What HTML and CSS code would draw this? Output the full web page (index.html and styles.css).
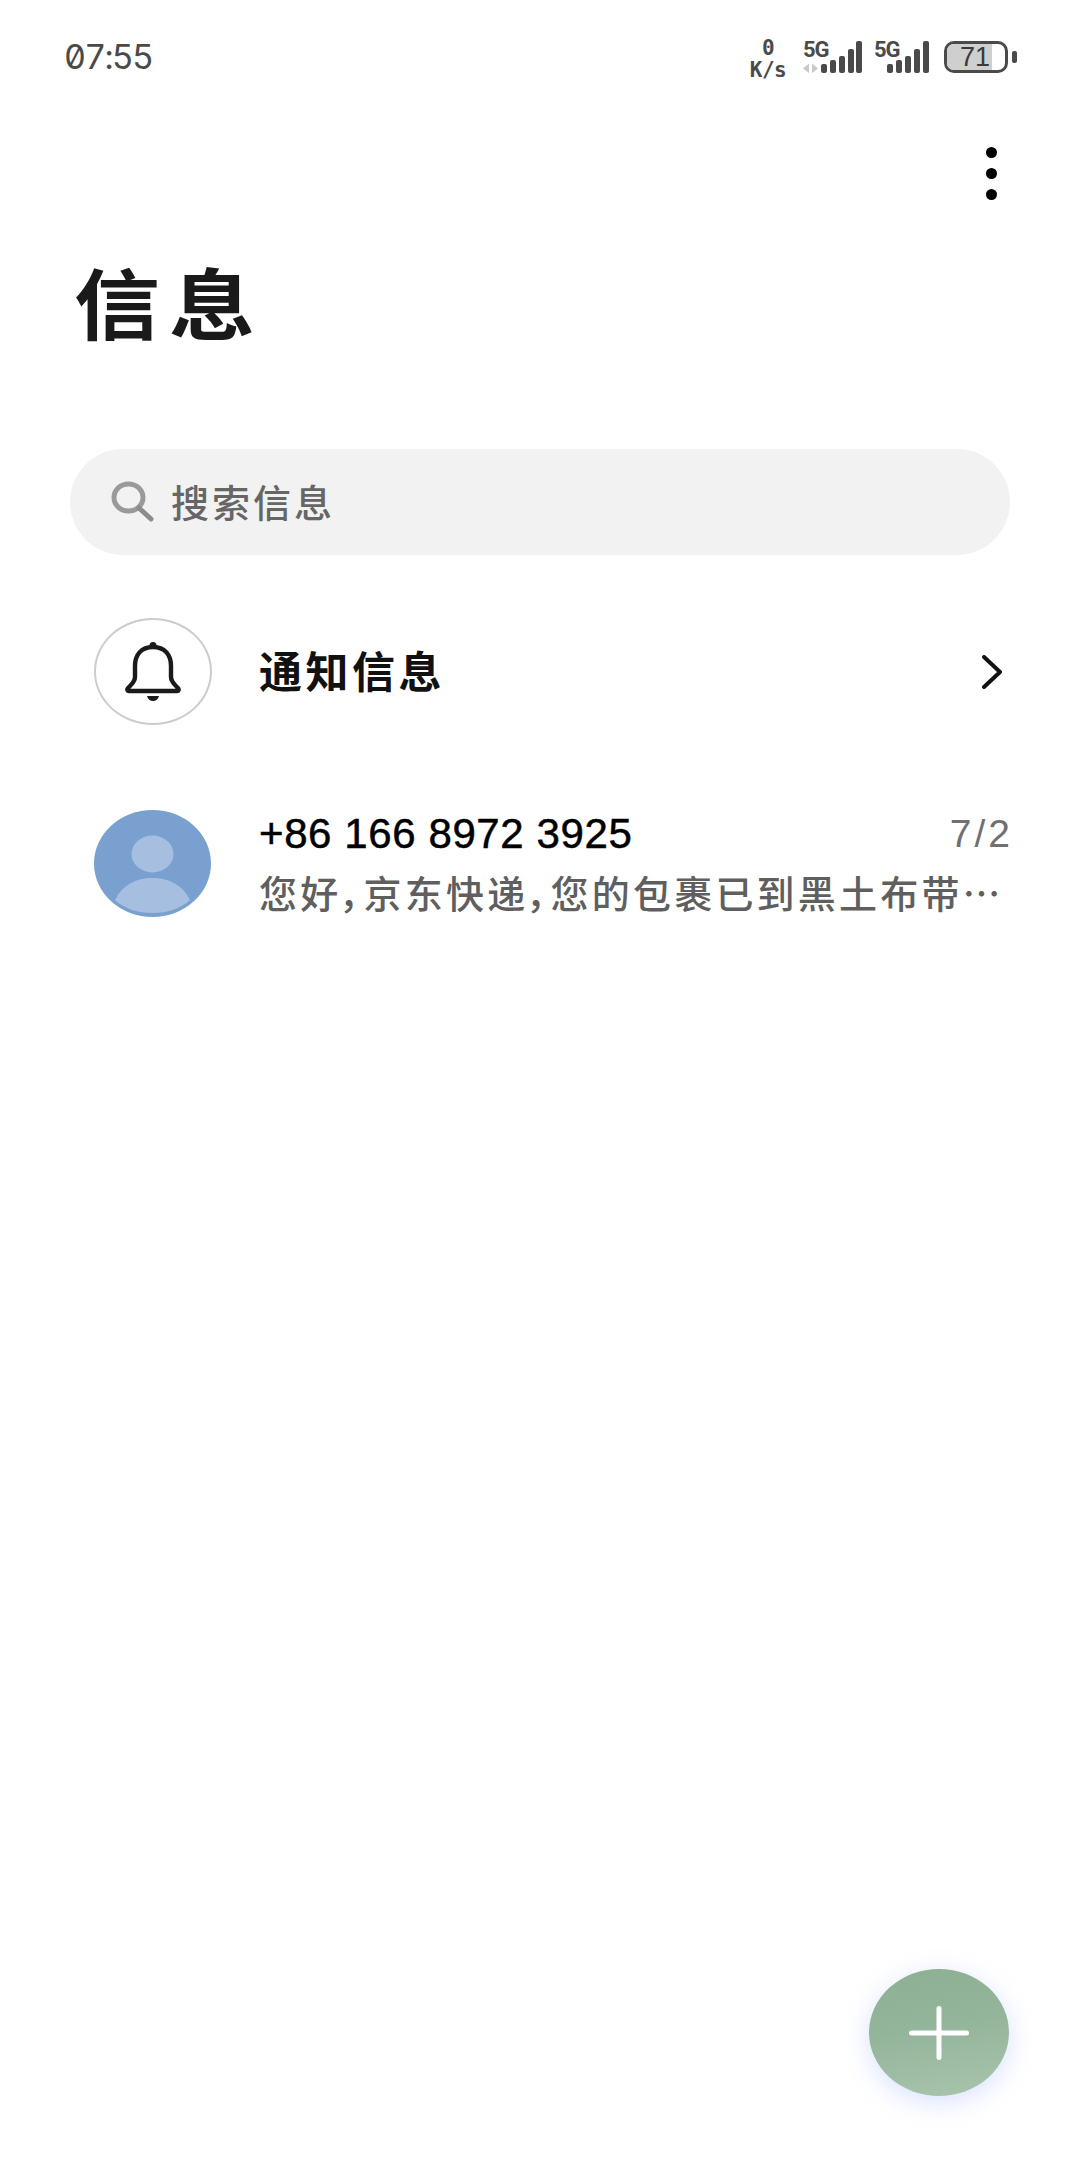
FILE: index.html
```html
<!DOCTYPE html>
<html lang="zh-CN">
<head>
    <meta charset="UTF-8">
    <title>信息</title>
    <link rel="stylesheet" href="styles.css">
</head>
<body>
    <div class="screen">
        <div class="status-bar">
            <span class="time">07:55</span>
            <div class="status-icons">
                <div class="net-speed"><span>0</span><span>K/s</span></div>
                <div class="signal">
                    <span class="signal-type">5G</span>
                    <svg width="59" height="32" viewBox="0 0 59 32">
                        <path d="M6 22.500 0 27.500 6 32ZM9 22.500 15 27.500 9 32Z" fill="#c8c8c8"/>
                        <g fill="#4a4a4a">
                            <rect x="18" y="23" width="6" height="9" rx="2"/>
                            <rect x="27" y="19" width="6" height="13" rx="2"/>
                            <rect x="36" y="15" width="6" height="17" rx="2"/>
                            <rect x="45" y="8" width="6" height="24" rx="2"/>
                            <rect x="53" y="0" width="6" height="32" rx="2"/>
                        </g>
                    </svg>
                </div>
                <div class="signal signal-second">
                    <span class="signal-type">5G</span>
                    <svg width="55" height="32" viewBox="0 0 55 32">
                        <g fill="#4a4a4a">
                            <rect x="13" y="23" width="6" height="9" rx="2"/>
                            <rect x="22" y="19" width="6" height="13" rx="2"/>
                            <rect x="31" y="15" width="6" height="17" rx="2"/>
                            <rect x="40" y="8" width="6" height="24" rx="2"/>
                            <rect x="49" y="0" width="6" height="32" rx="2"/>
                        </g>
                    </svg>
                </div>
                <div class="battery">
                    <div class="battery-body">
                        <div class="battery-fill"></div>
                        <span class="battery-level">71</span>
                    </div>
                    <div class="battery-nub"></div>
                </div>
            </div>
        </div>

        <div class="toolbar">
            <div class="more-btn"><i></i><i></i><i></i></div>
        </div>

        <h1 class="page-title">信息</h1>

        <div class="search-box">
            <svg width="44" height="42" viewBox="0 0 44 42">
                <ellipse cx="17.500" cy="16.500" rx="14.500" ry="13.500" fill="none" stroke="#9a9a9a" stroke-width="5"/>
                <path d="M28 27 40 38" stroke="#8c8c8c" stroke-width="5" stroke-linecap="round"/>
            </svg>
            <span>搜索信息</span>
        </div>

        <div class="notice-row">
            <div class="notice-icon">
                <svg width="56" height="62" viewBox="0 0 56 62">
                    <path d="M28 6C16 6 10 14 10 25V36C10 41 6 44 3 47C2 48 2 50 4 50H52C54 50 54 48 53 47C50 44 46 41 46 36V25C46 14 40 6 28 6Z" fill="none" stroke="#1a1a1a" stroke-width="4.400" stroke-linejoin="round"/>
                    <circle cx="28" cy="4.500" r="3.500" fill="#1a1a1a"/>
                    <path d="M22 55H34C33 58.500 31 60 28 60C25 60 23 58.500 22 55Z" fill="#1a1a1a"/>
                </svg>
            </div>
            <span class="notice-label">通知信息</span>
            <svg class="chevron" width="20" height="34" viewBox="0 0 20 34">
                <path d="M2 2 18 17 2 32" fill="none" stroke="#111" stroke-width="4" stroke-linecap="round" stroke-linejoin="round"/>
            </svg>
        </div>

        <div class="message-row">
            <svg class="avatar" width="117" height="107" viewBox="0 0 117 107">
                <ellipse cx="58.500" cy="53.500" rx="58.500" ry="53.500" fill="#7aa0cf"/>
                <ellipse cx="58.500" cy="44" rx="21" ry="18.500" fill="#a6bfe0"/>
                <path d="M21 90C28 75 42 68 58.500 68C75 68 89 75 96 90C86 99 73 103 58.500 103C44 103 31 99 21 90Z" fill="#a6bfe0"/>
            </svg>
            <div class="message-body">
                <div class="message-top">
                    <span class="phone">+86 166 8972 3925</span>
                    <span class="date">7/2</span>
                </div>
                <div class="preview">您好，京东快递，您的包裹已到黑土布带…</div>
            </div>
        </div>

        <div class="fab">
            <svg width="60" height="54" viewBox="0 0 60 54">
                <path d="M2.500 27H57.500M30 2.500V51.500" stroke="#fff" stroke-width="5" stroke-linecap="round"/>
            </svg>
        </div>
    </div>
</body>
</html>
```

FILE: styles.css
```css
* {
    box-sizing: border-box;
}
body {
    margin: 0;
    background-color: #ffffff;
    font-family: "Noto Sans CJK SC", "Liberation Sans", sans-serif;
}
.screen {
    position: relative;
    width: 1080px;
    height: 2160px;
    overflow: hidden;
}
.status-bar {
    display: flex;
    justify-content: space-between;
    align-items: flex-start;
    height: 147px;
    padding: 39px 63px 0 64px;
}
.time {
    font-family: "Inter", sans-serif;
    font-size: 34px;
    line-height: 36px;
    letter-spacing: -1.800px;
    font-feature-settings: "zero", "tnum";
    color: #4a4a4a;
}
.status-icons {
    display: flex;
    align-items: flex-start;
}
.net-speed {
    display: flex;
    flex-direction: column;
    align-items: center;
    width: 38px;
    margin-right: 16px;
    font-family: "DejaVu Sans Mono", monospace;
    font-size: 21px;
    font-weight: bold;
    line-height: 19px;
    letter-spacing: -0.500px;
    color: #4a4a4a;
}
.net-speed span:last-child {
    margin-top: 3px;
}
.signal {
    position: relative;
    width: 59px;
    height: 34px;
    margin-top: 2px;
}
.signal-second {
    width: 55px;
    margin-left: 12px;
}
.signal-type {
    position: absolute;
    left: 0;
    top: -1px;
    font-family: "Roboto", sans-serif;
    font-size: 22px;
    font-weight: bold;
    line-height: 20px;
    letter-spacing: -1px;
    color: #4a4a4a;
}
.signal svg {
    display: block;
}
.battery {
    display: flex;
    align-items: center;
    margin-left: 15px;
    margin-top: 2px;
}
.battery-body {
    position: relative;
    width: 64px;
    height: 32px;
    border: 3px solid #4a4a4a;
    border-radius: 10px;
    overflow: hidden;
}
.battery-fill {
    width: 45px;
    height: 100%;
    background-color: #cfcfcf;
}
.battery-level {
    position: absolute;
    left: 13px;
    top: 0;
    font-family: "Liberation Sans", sans-serif;
    font-size: 27px;
    line-height: 26px;
    color: #3a3a3a;
}
.battery-nub {
    width: 5px;
    height: 12px;
    margin-left: 4px;
    background-color: #4a4a4a;
    border-radius: 2px;
}
.toolbar {
    display: flex;
    justify-content: flex-end;
    padding-right: 83px;
}
.more-btn {
    display: flex;
    flex-direction: column;
    gap: 10px;
}
.more-btn i {
    width: 11px;
    height: 11px;
    background-color: #000;
    border-radius: 50%;
}
/* glyphs in the shot are a bit wider than tall */
.page-title {
    margin: 49px 0 0 74px;
    font-size: 86px;
    font-weight: 700;
    line-height: 110px;
    letter-spacing: 9px;
    transform: scaleY(0.9);
    transform-origin: 0 20%;
    color: #1a1a1a;
}
.search-box {
    display: flex;
    align-items: center;
    height: 106px;
    margin: 90px 70px 0;
    padding-left: 41px;
    background-color: #f2f2f2;
    border-radius: 53px;
    font-size: 38px;
    font-weight: 500;
    letter-spacing: 3px;
    color: #666666;
}
.search-box span {
    margin: -3px 0 0 16px;
}
.notice-row {
    display: flex;
    align-items: center;
    height: 107px;
    margin: 63px 78px 0 94px;
}
.notice-icon {
    display: flex;
    align-items: center;
    justify-content: center;
    width: 118px;
    height: 107px;
    border: 2.500px solid #cccccc;
    border-radius: 50%;
}
.notice-label {
    flex: 1;
    margin: -6px 0 0 47px;
    font-size: 43px;
    font-weight: 700;
    letter-spacing: 3.500px;
    color: #111111;
}
.message-row {
    display: flex;
    align-items: center;
    margin: 84px 70px 0 94px;
}
.avatar {
    flex-shrink: 0;
}
.message-body {
    flex: 1;
    margin-left: 48px;
}
.message-top {
    display: flex;
    justify-content: space-between;
    align-items: center;
    height: 50px;
}
.phone {
    font-family: "Liberation Sans", sans-serif;
    font-size: 42px;
    letter-spacing: 0.600px;
    -webkit-text-stroke: 0.500px #000000;
    color: #000000;
}
.date {
    margin-right: -3px;
    font-family: "Liberation Sans", sans-serif;
    font-size: 39px;
    letter-spacing: 3px;
    color: #707070;
}
.preview {
    margin-top: 8px;
    font-size: 38px;
    font-weight: 500;
    line-height: 50px;
    letter-spacing: 3.200px;
    font-feature-settings: "palt";
    white-space: nowrap;
    color: #5f5f5f;
}
.fab {
    position: absolute;
    right: 71px;
    bottom: 64px;
    display: flex;
    align-items: center;
    justify-content: center;
    width: 140px;
    height: 127px;
    border-radius: 50%;
    background: linear-gradient(170deg, #8db093 0%, #93b59a 45%, #a9c4ae 100%);
    box-shadow: 0 6px 26px rgba(120, 150, 255, 0.28);
}
```
